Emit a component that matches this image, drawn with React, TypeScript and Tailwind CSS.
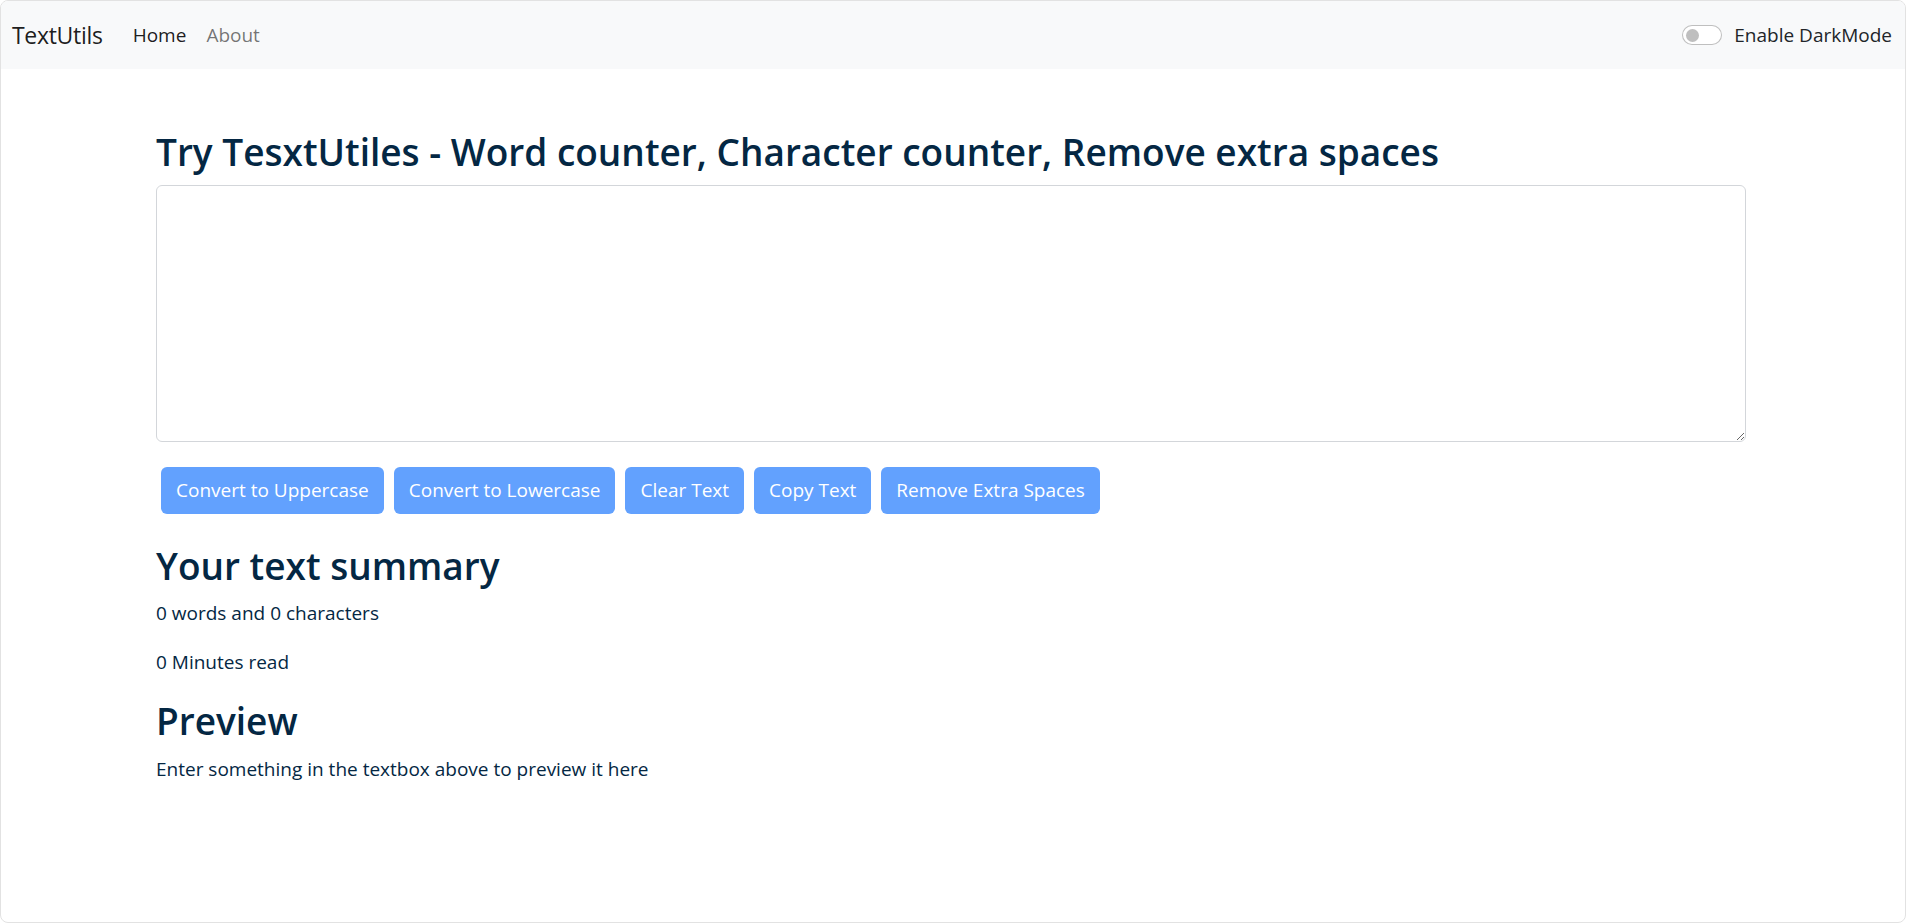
import { useState } from 'react'

const FONT = { fontFamily: '"Open Sans", "Noto Sans", "Liberation Sans", sans-serif' }

const BUTTONS = [
  'Convert to Uppercase',
  'Convert to Lowercase',
  'Clear Text',
  'Copy Text',
  'Remove Extra Spaces',
]

function Navbar() {
  return (
    <nav className="h-[68px] bg-[#f8f9fa] flex items-center justify-between px-[11px]">
      <div className="flex items-center">
        <a className="text-[23px] text-[#000000e6] mr-[20px] tracking-[-0.3px]">TextUtils</a>
        <a className="text-[19px] text-[#000000e6] px-[10px]">Home</a>
        <a className="text-[19px] text-[#0000008c] px-[10px]">About</a>
      </div>
      <label className="flex items-center gap-[12px] mr-[2px]">
        <span className="w-[40px] h-[20px] rounded-full border border-[#00000040] bg-white flex items-center px-[3px]">
          <span className="w-[13px] h-[13px] rounded-full bg-[#bfbfbf]" />
        </span>
        <span className="text-[19px] text-[#212529]">Enable DarkMode</span>
      </label>
    </nav>
  )
}

export default function App() {
  const [text, setText] = useState('')
  const words = text.split(/\s+/).filter((w) => w.length !== 0).length

  return (
    <div style={FONT} className="w-[1906px] h-[923px] bg-white overflow-hidden rounded-[8px] border border-[#e2e2e2]">
      <Navbar />
      <div className="w-[1590px] ml-[155px] pt-[59px] text-[#042743]">
        <h2 className="text-[37px] leading-[48px] font-semibold mb-[9px]">
          Try TesxtUtiles - Word counter, Character counter, Remove extra spaces
        </h2>
        <textarea
          value={text}
          onChange={(e) => setText(e.target.value)}
          className="block w-full h-[257px] border border-[#d3d6da] rounded-[6px] px-[14px] py-[7px] text-[19px] resize-y outline-none"
        />
        <div className="flex gap-[10px] mt-[25px] pl-[5px]">
          {BUTTONS.map((b) => (
            <button
              key={b}
              disabled={text.length === 0}
              className="h-[47px] px-[15px] rounded-[6px] bg-[#62a1fe] text-white text-[19px]"
            >
              {b}
            </button>
          ))}
        </div>
        <h2 className="text-[37px] leading-[48px] font-semibold mt-[28px] mb-[9px]">
          Your text summary
        </h2>
        <p className="text-[19px] leading-[29px] mb-[20px]">
          {words} words and {text.length} characters
        </p>
        <p className="text-[19px] leading-[29px] mb-[20px]">
          {0.008 * words} Minutes read
        </p>
        <h2 className="text-[37px] leading-[48px] font-semibold mb-[10px]">Preview</h2>
        <p className="text-[19px] leading-[29px]">
          {text.length > 0 ? text : 'Enter something in the textbox above to preview it here'}
        </p>
      </div>
    </div>
  )
}
